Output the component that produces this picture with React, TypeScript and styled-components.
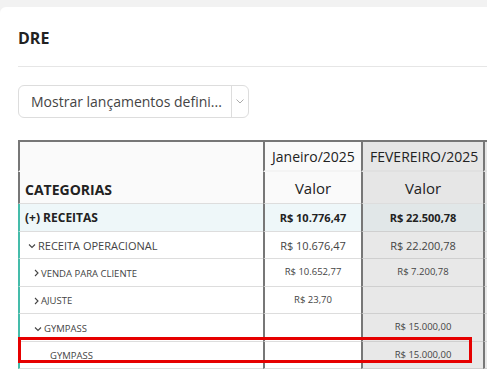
import React from 'react';
import styled, {createGlobalStyle} from 'styled-components';

const GlobalStyle = createGlobalStyle`
  * { box-sizing: border-box; }
  html, body {
    margin: 0;
    padding: 0;
    overflow: hidden;
    background: #f2f2f2;
    font-family: 'Open Sans', 'Liberation Sans', sans-serif;
    color: #333;
  }
`;

const Card = styled.div`
  margin-top: 7px;
  width: 660px;
  min-height: 380px;
  background: #fff;
  border-radius: 6px 0 0 0;
  padding: 20px 0 0 18px;
`;

const Title = styled.h2`
  margin: 0 0 17px;
  font-size: 16px;
  line-height: 22px;
  font-weight: 700;
  color: #222;
`;

const Divider = styled.hr`
  margin: 0 0 18px;
  border: 0;
  border-top: 1px solid #e6e6e6;
`;

const Select = styled.div`
  display: flex;
  width: 231px;
  height: 33px;
  border: 1px solid #ddd;
  border-radius: 6px;
  margin-bottom: 22px;
`;

const SelectValue = styled.div`
  flex: 1;
  display: flex;
  align-items: center;
  padding-left: 12px;
  font-size: 14px;
  color: #444;
  white-space: nowrap;
`;

const SelectToggle = styled.div`
  width: 17px;
  display: flex;
  align-items: center;
  justify-content: center;
  border-left: 1px solid #ddd;
  color: #999;
`;

const Table = styled.table`
  border-collapse: separate;
  border-spacing: 0;
  table-layout: fixed;
  width: 585px;
`;

type Col = 'cat' | 'jan' | 'fev' | 'next';

const HeadCell = styled.th<{$col: Col; $top?: boolean}>`
  height: 32px;
  padding: 0 ${p => (p.$col === 'cat' ? '5px' : '7px')};
  border-left: 2px solid #777;
  border-top: ${p => (p.$top ? '2px solid #777' : '0')};
  border-bottom: ${p =>
    p.$top
      ? `2px solid ${p.$col === 'cat' ? '#fafafa' : p.$col === 'jan' ? '#f4f4f4' : '#e0e0e0'}`
      : '1px solid #ddd'};
  background: ${p => (p.$col === 'cat' || p.$col === 'jan' ? '#fafafa' : '#e6e6e6')};
  font-size: ${p => (p.$top ? 14 : 15)}px;
  font-weight: ${p => (p.$col === 'cat' ? 700 : 400)};
  text-align: ${p => (p.$col === 'cat' ? 'left' : 'center')};
  vertical-align: middle;
  color: #222;
  white-space: nowrap;
  &.categorias {
    font-size: 14px;
    padding-top: 4px;
  }
`;

const Row = styled.tr<{$total?: boolean}>`
  height: 27.5px;
  background: ${p => (p.$total ? '#eef7f9' : '#fff')};
`;

const LabelCell = styled.td<{$level: number}>`
  position: relative;
  border-left: 2px solid #45bcaa;
  border-bottom: 1px solid #ddd;
  padding: ${p => (p.$level >= 2 ? '2px' : '0')} 0 0 ${p => [5, 8, 14, 30][p.$level]}px;
  font-size: ${p => (p.$level === 0 ? 12 : p.$level === 1 ? 11 : 9.5)}px;
  font-weight: ${p => (p.$level === 0 ? 700 : 400)};
  color: ${p => (p.$level === 0 ? '#222' : '#444')};
  white-space: nowrap;
  vertical-align: middle;
`;

const Label = styled.span`
  display: inline-flex;
  align-items: center;
  gap: 2px;
`;

const ValueCell = styled.td<{$level: number; $shade?: boolean; $total?: boolean}>`
  border-left: 2px solid #777;
  border-bottom: 1px solid ${p => (p.$shade ? '#cfcfcf' : '#ddd')};
  background: ${p => (p.$shade ? (p.$total ? '#e1e7e8' : '#e8e8e8') : 'transparent')};
  text-align: center;
  font-size: ${p => (p.$level <= 1 ? 11 : 9.5)}px;
  font-weight: ${p => (p.$level === 0 ? 700 : 400)};
  color: ${p => (p.$level === 0 ? '#222' : '#444')};
  padding-bottom: ${p => (p.$level >= 2 ? 2 : 0)}px;
  vertical-align: middle;
  white-space: nowrap;
`;

const Highlight = styled.div`
  position: absolute;
  left: -2px;
  top: -5px;
  width: 454px;
  height: 26px;
  border: 3px solid #e60000;
  pointer-events: none;
`;

type Icon = 'down' | 'right';

type Line = {
  label: string;
  level: number;
  icon?: Icon;
  jan: string;
  fev: string;
  highlight?: boolean;
};

const lines: Line[] = [
  {label: '(+) RECEITAS', level: 0, jan: 'R$ 10.776,47', fev: 'R$ 22.500,78'},
  {label: 'RECEITA OPERACIONAL', level: 1, icon: 'down', jan: 'R$ 10.676,47', fev: 'R$ 22.200,78'},
  {label: 'VENDA PARA CLIENTE', level: 2, icon: 'right', jan: 'R$ 10.652,77', fev: 'R$ 7.200,78'},
  {label: 'AJUSTE', level: 2, icon: 'right', jan: 'R$ 23,70', fev: ''},
  {label: 'GYMPASS', level: 2, icon: 'down', jan: '', fev: 'R$ 15.000,00'},
  {label: 'GYMPASS', level: 3, jan: '', fev: 'R$ 15.000,00', highlight: true},
];

function Chevron({dir}: {dir: Icon}) {
  if (dir === 'right') {
    return (
      <svg width="5" height="8" viewBox="0 0 5 8">
        <polyline points="1,1 4,4 1,7" fill="none" stroke="#444" strokeWidth="1.1" />
      </svg>
    );
  }
  return (
    <svg width="8" height="6" viewBox="0 0 8 6">
      <polyline points="1,1.5 4,4.5 7,1.5" fill="none" stroke="#444" strokeWidth="1.1" />
    </svg>
  );
}

export default function App() {
  return (
    <>
      <GlobalStyle />
      <Card>
        <Title>DRE</Title>
        <Divider />
        <Select>
          <SelectValue>Mostrar lançamentos defini...</SelectValue>
          <SelectToggle>
            <svg width="8" height="5" viewBox="0 0 8 5">
              <polyline points="0.5,0.5 4,4 7.5,0.5" fill="none" stroke="#aaa" strokeWidth="1" />
            </svg>
          </SelectToggle>
        </Select>
        <Table>
          <colgroup>
            <col style={{width: 245}} />
            <col style={{width: 98}} />
            <col style={{width: 122}} />
            <col style={{width: 120}} />
          </colgroup>
          <thead>
            <tr>
              <HeadCell $col="cat" $top />
              <HeadCell $col="jan" $top>Janeiro/2025</HeadCell>
              <HeadCell $col="fev" $top>FEVEREIRO/2025</HeadCell>
              <HeadCell $col="next" $top />
            </tr>
            <tr>
              <HeadCell $col="cat" className="categorias">CATEGORIAS</HeadCell>
              <HeadCell $col="jan">Valor</HeadCell>
              <HeadCell $col="fev">Valor</HeadCell>
              <HeadCell $col="next" />
            </tr>
          </thead>
          <tbody>
            {lines.map((line, i) => (
              <Row key={i} $total={line.level === 0}>
                <LabelCell $level={line.level}>
                  <Label>
                    {line.icon && <Chevron dir={line.icon} />}
                    {line.label}
                  </Label>
                  {line.highlight && <Highlight />}
                </LabelCell>
                <ValueCell $level={line.level}>{line.jan}</ValueCell>
                <ValueCell $level={line.level} $shade $total={line.level === 0}>
                  {line.fev}
                </ValueCell>
                <ValueCell $level={line.level} $shade $total={line.level === 0} />
              </Row>
            ))}
          </tbody>
        </Table>
      </Card>
    </>
  );
}
